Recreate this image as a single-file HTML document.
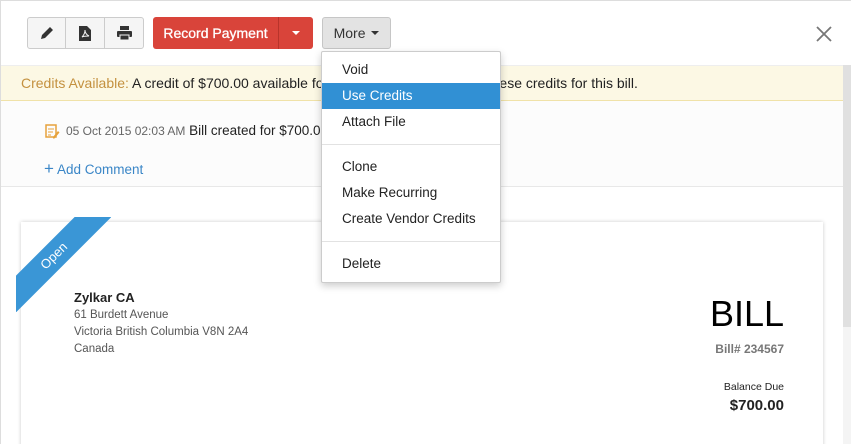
<!DOCTYPE html>
<html><head><meta charset="utf-8"><style>
*{box-sizing:border-box;margin:0;padding:0}
html,body{width:851px;height:444px;overflow:hidden}
body{background:#fff;font-family:"Liberation Sans",sans-serif;position:relative;color:#222}
.abs{position:absolute}
</style></head><body>
<div class="abs" style="left:0;top:0;width:851px;height:1px;background:#ddd"></div>
<div class="abs" style="left:0;top:0;width:1px;height:444px;background:#ddd"></div>
<div class="abs" style="left:843px;top:65px;width:8px;height:262px;background:#e0e0e0"></div>
<div class="abs" style="left:843px;top:327px;width:8px;height:117px;background:#f4f4f4"></div>
<!-- toolbar -->
<div class="abs" style="left:27px;top:17px;width:117px;height:32px;border:1px solid #ccc;border-radius:3px;background:#f5f5f5;display:flex">
 <div style="width:38px;border-right:1px solid #ccc;display:flex;align-items:center;justify-content:center"><svg width="14" height="14" viewBox="0 0 14 14"><path d="M1 13l1-4 7-7 3 3-7 7z M10 1l3 3 -1 1-3-3z" fill="#333"/></svg></div>
 <div style="width:39px;border-right:1px solid #ccc;display:flex;align-items:center;justify-content:center"><svg width="12" height="15" viewBox="0 0 12 15"><path d="M0 0h8l4 4v11H0z" fill="#333"/><path d="M3 11c2-2 3-4 3-7 0 3 2 5 4 6-2 0-5 0-7 1z" fill="none" stroke="#f5f5f5" stroke-width="1"/></svg></div>
 <div style="flex:1;display:flex;align-items:center;justify-content:center"><svg width="15" height="14" viewBox="0 0 15 14"><rect x="3" y="0" width="9" height="4" fill="#333"/><rect x="0" y="5" width="15" height="6" rx="1" fill="#333"/><rect x="3" y="9" width="9" height="5" fill="#333" stroke="#f5f5f5"/></svg></div>
</div>
<div class="abs" style="left:153px;top:17px;width:160px;height:32px;background:#d9443a;border-radius:3px;color:#fff;font-size:14px;display:flex">
 <div style="width:126px;display:flex;align-items:center;justify-content:center;border-right:1px solid #b8342b;-webkit-text-stroke:0.3px #fff">Record Payment</div>
 <div style="flex:1;display:flex;align-items:center;justify-content:center"><div style="border-left:4px solid transparent;border-right:4px solid transparent;border-top:4px solid #fff"></div></div>
</div>
<div class="abs" style="left:322px;top:17px;width:69px;height:32px;background:#e3e3e3;border:1px solid #c6c6c6;border-radius:3px;font-size:14px;color:#333;display:flex;align-items:center;justify-content:center">More&nbsp;<span style="border-left:4px solid transparent;border-right:4px solid transparent;border-top:4px solid #333;margin-left:2px"></span></div>
<svg class="abs" style="left:816px;top:26px" width="16" height="16" viewBox="0 0 16 16"><path d="M1 1L15 15M15 1L1 15" stroke="#777" stroke-width="1.8"/></svg>
<!-- banner -->
<div class="abs" style="left:1px;top:65px;width:842px;height:36px;background:#fcf8e4;border-top:1px solid #eee;border-bottom:1px solid #f0e2a8;font-size:14px;line-height:34px;padding-left:20px;color:#222;white-space:nowrap"><span style="color:#c4913f">Credits Available:</span> A credit of $700.00 available for this vendor. You can use these credits for this bill.</div>
<div class="abs" style="left:1px;top:101px;width:842px;height:86px;background:#fcfcfc;border-bottom:1px solid #e8e8e8"></div>
<svg class="abs" style="left:45px;top:124px" width="15" height="15" viewBox="0 0 15 15"><rect x="1" y="1" width="10" height="12" fill="none" stroke="#e6a23c" stroke-width="1.5"/><path d="M3 5h6M3 8h5M3 11h3" stroke="#e6a23c"/><path d="M8 13l5-6 1.5 1.5-5 6H8z" fill="#e6a23c"/></svg>
<div class="abs" style="left:66px;top:123px;font-size:13.5px;white-space:nowrap"><span style="color:#666;font-size:12px">05 Oct 2015 02:03 AM</span> Bill created for $700.00</div>
<div class="abs" style="left:44px;top:159px;font-size:13.5px;color:#3a86c7"><span style="font-size:17px">+</span> Add Comment</div>
<!-- card -->
<div class="abs" style="left:21px;top:222px;width:802px;height:240px;background:#fff;box-shadow:0 0 4px rgba(0,0,0,.2)"></div>
<div class="abs" style="left:16px;top:217px;width:95px;height:95px;overflow:hidden">
 <div style="position:absolute;left:-37px;top:26px;width:150px;height:26px;background:#3a96d6;transform:rotate(-45deg);color:#fff;font-size:13px;text-align:center;line-height:26px">Open</div>
</div>
<div class="abs" style="left:74px;top:290px;font-size:13px;font-weight:bold;color:#222">Zylkar CA</div>
<div class="abs" style="left:74px;top:307px;font-size:11.5px;color:#555;line-height:17px">61 Burdett Avenue<br>Victoria British Columbia V8N 2A4<br>Canada</div>
<div class="abs" style="left:600px;top:294px;width:184px;text-align:right;font-size:36px;color:#000;line-height:40px">BILL</div>
<div class="abs" style="left:600px;top:342px;width:184px;text-align:right;font-size:12px;color:#777;font-weight:bold">Bill# 234567</div>
<div class="abs" style="left:600px;top:381px;width:184px;text-align:right;font-size:10.5px;color:#222">Balance Due</div>
<div class="abs" style="left:600px;top:397px;width:184px;text-align:right;font-size:15px;color:#222;font-weight:bold">$700.00</div>
<!-- dropdown -->
<div class="abs" style="left:321px;top:51px;width:180px;height:232px;background:#fff;border:1px solid #ccc;border-radius:2px;box-shadow:0 3px 8px rgba(0,0,0,.2);font-size:13.5px;color:#222">
 <div style="position:absolute;left:20px;top:10px">Void</div>
 <div style="position:absolute;left:0;top:31px;width:178px;height:26px;background:#3190d4;color:#fff;padding-left:20px;line-height:26px">Use Credits</div>
 <div style="position:absolute;left:20px;top:62px">Attach File</div>
 <div style="position:absolute;left:0;top:92px;width:178px;height:1px;background:#e2e2e2"></div>
 <div style="position:absolute;left:20px;top:107px">Clone</div>
 <div style="position:absolute;left:20px;top:133px">Make Recurring</div>
 <div style="position:absolute;left:20px;top:159px">Create Vendor Credits</div>
 <div style="position:absolute;left:0;top:189px;width:178px;height:1px;background:#e2e2e2"></div>
 <div style="position:absolute;left:20px;top:204px">Delete</div>
</div>
</body></html>
